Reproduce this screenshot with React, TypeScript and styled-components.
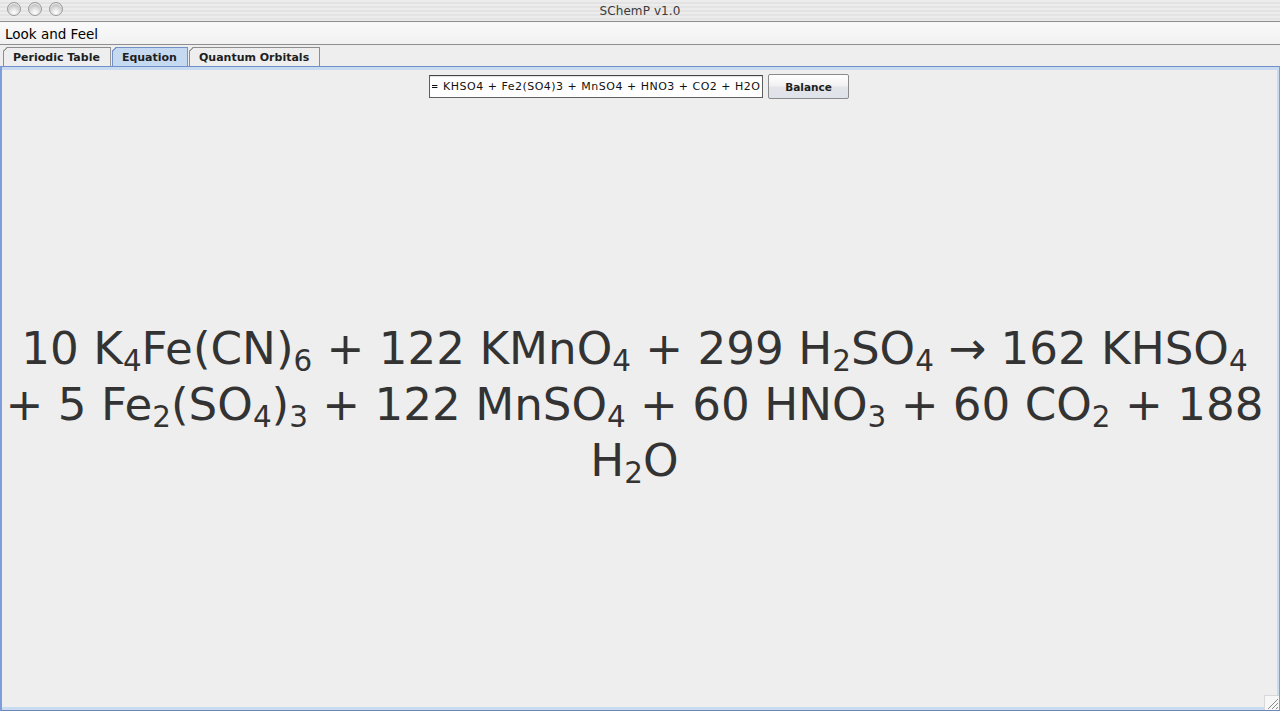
import React, { useEffect, useRef } from "react";
import styled, { createGlobalStyle } from "styled-components";

const Global = createGlobalStyle`
  html, body { margin: 0; padding: 0; background: #ececec; }
  body { width: 1280px; height: 711px; overflow: hidden; font-family: "DejaVu Sans", "Liberation Sans", sans-serif; }
`;

const Window = styled.div`
  width: 1280px;
  height: 711px;
  display: flex;
  flex-direction: column;
  background: #eeeeee;
  position: relative;
  overflow: hidden;
`;

const TitleBar = styled.div`
  height: 21px;
  flex: none;
  position: relative;
  display: flex;
  align-items: center;
  justify-content: center;
  border-bottom: 1px solid #8e8e8e;
  background: repeating-linear-gradient(
    to bottom,
    #ececec 0px,
    #ececec 2px,
    #e3e3e3 2px,
    #e3e3e3 4px
  );
`;

const Title = styled.div`
  font-family: "DejaVu Sans", sans-serif;
  font-size: 12px;
  color: #3a3a3a;
  letter-spacing: 0.1px;
`;

const Lights = styled.div`
  position: absolute;
  left: 7px;
  top: 2px;
  display: flex;
  gap: 7px;
`;

const Light = styled.div`
  width: 14px;
  height: 14px;
  border-radius: 50%;
  box-sizing: border-box;
  border: 1px solid #9a9a9a;
  background: radial-gradient(circle at 50% 80%, #ffffff 0%, #e4e4e4 35%, #bdbdbd 75%, #a9a9a9 100%);
  box-shadow: inset 0 1px 1px rgba(255, 255, 255, 0.9);
`;

const MenuBar = styled.div`
  height: 22px;
  flex: none;
  display: flex;
  align-items: center;
  padding-left: 5px;
  border-bottom: 1px solid #8e8e8e;
  background: linear-gradient(#fafafa, #f1f1f1);
`;

const MenuItem = styled.div`
  font-family: "DejaVu Sans", sans-serif;
  font-size: 13.5px;
  color: #000;
  padding-top: 1px;
`;

const TabStrip = styled.div`
  height: 20px;
  flex: none;
  display: flex;
  align-items: flex-end;
  padding-left: 3px;
  margin-top: 1px;
  gap: 1px;
`;

const Tab = styled.div<{ $active?: boolean }>`
  height: 19px;
  box-sizing: border-box;
  display: flex;
  align-items: center;
  padding: 1px 10px 0 9px;
  font-family: "DejaVu Sans", sans-serif;
  font-weight: bold;
  font-size: 11px;
  color: #1e1e1e;
  background: ${(p) => (p.$active ? "#c5d9f0" : "#eeeeee")};
  border: 1px solid ${(p) => (p.$active ? "#7390c6" : "#8d8d8d")};
  border-bottom: none;
  clip-path: polygon(4px 0, 100% 0, 100% 100%, 0 100%, 0 4px);
  position: relative;
`;

const Corner = styled.span<{ $active?: boolean }>`
  position: absolute;
  left: -1px;
  top: -1px;
  width: 6px;
  height: 6px;
  background: linear-gradient(
    135deg,
    transparent 0,
    transparent 2.4px,
    ${(p) => (p.$active ? "#7390c6" : "#8d8d8d")} 2.4px,
    ${(p) => (p.$active ? "#7390c6" : "#8d8d8d")} 3.6px,
    transparent 3.6px
  );
`;

const Panel = styled.div`
  flex: 1;
  display: flex;
  flex-direction: column;
  border-top: 1px solid #6f8fcb;
  border-left: 2px solid #7f9ddb;
  border-right: 1px solid #8d9bb3;
  border-bottom: 1px solid #6d86b5;
  box-shadow: inset 0 3px 0 #c9dbf1, inset 0 -3px 0 #c9dbf1, inset -2px 0 0 #c9dbf1;
  background: #eeeeee;
`;

const FormRow = styled.div`
  flex: none;
  display: flex;
  justify-content: center;
  align-items: center;
  gap: 5px;
  padding-top: 7px;
  padding-right: 3px;
  height: 25px;
`;

const Field = styled.input`
  width: 334px;
  height: 23px;
  box-sizing: border-box;
  border: 1px solid #5f5f5f;
  border-top-color: #444;
  box-shadow: inset 0 1px 1px rgba(0, 0, 0, 0.12);
  background: #fff;
  font-family: "DejaVu Sans", sans-serif;
  font-size: 11px;
  letter-spacing: 0.5px;
  color: #111;
  padding: 0 2px;
  outline: none;
`;

const Button = styled.button`
  width: 81px;
  height: 25px;
  box-sizing: border-box;
  border: 1px solid #8b8b8b;
  border-radius: 2px;
  background: linear-gradient(#ffffff 0%, #f2f2f2 45%, #e2e4e8 55%, #dfe3ea 100%);
  font-family: "DejaVu Sans", sans-serif;
  font-weight: bold;
  font-size: 10.5px;
  color: #1e1e1e;
  padding: 0;
`;

const Stage = styled.div`
  flex: 1;
  display: flex;
  align-items: center;
  justify-content: center;
`;

const Equation = styled.div`
  width: 100%;
  flex: none;
  margin: 0 6px 0 -6px;
  text-align: center;
  font-family: "DejaVu Sans", sans-serif;
  font-size: 45.2px;
  line-height: 56px;
  color: #333333;
`;

const Sub = styled.sub`
  font-size: 0.65em;
  vertical-align: -0.25em;
  line-height: 0;
`;

const Grip = styled.div`
  position: absolute;
  right: 1px;
  bottom: 1px;
  width: 14px;
  height: 14px;
  background: #f7f7f7;
  border-left: 1px solid #d8d8d8;
  border-top: 1px solid #d8d8d8;
`;

const GripSvg = styled.svg`
  display: block;
`;

const fullEquation =
  "K4Fe(CN)6 + KMnO4 + H2SO4 = KHSO4 + Fe2(SO4)3 + MnSO4 + HNO3 + CO2 + H2O";

const F = ({ t }: { t: string }) => {
  const parts = t.split(/(\d+)/).filter(Boolean);
  return (
    <>
      {parts.map((p, i) => (/^\d+$/.test(p) ? <Sub key={i}>{p}</Sub> : <React.Fragment key={i}>{p}</React.Fragment>))}
    </>
  );
};

export default function App() {
  const ref = useRef<HTMLInputElement>(null);
  useEffect(() => {
    if (ref.current) ref.current.scrollLeft = ref.current.scrollWidth;
  }, []);

  const terms: [string, string][] = [
    ["10", "K4Fe(CN)6"],
    ["122", "KMnO4"],
    ["299", "H2SO4"],
  ];
  const products: [string, string][] = [
    ["162", "KHSO4"],
    ["5", "Fe2(SO4)3"],
    ["122", "MnSO4"],
    ["60", "HNO3"],
    ["60", "CO2"],
    ["188", "H2O"],
  ];

  return (
    <Window>
      <Global />
      <TitleBar>
        <Lights>
          <Light />
          <Light />
          <Light />
        </Lights>
        <Title>SChemP v1.0</Title>
      </TitleBar>
      <MenuBar>
        <MenuItem>Look and Feel</MenuItem>
      </MenuBar>
      <TabStrip>
        <Tab>
          <Corner />
          Periodic Table
        </Tab>
        <Tab $active>
          <Corner $active />
          Equation
        </Tab>
        <Tab>
          <Corner />
          Quantum Orbitals
        </Tab>
      </TabStrip>
      <Panel>
        <FormRow>
          <Field ref={ref} defaultValue={fullEquation} readOnly />
          <Button>Balance</Button>
        </FormRow>
        <Stage>
          <Equation>
            {terms.map(([c, f], i) => (
              <React.Fragment key={"r" + i}>
                {i > 0 ? " +\u00a0" : ""}
                {c} <F t={f} />
              </React.Fragment>
            ))}
            {" \u2192\u00a0"}
            {products.map(([c, f], i) => (
              <React.Fragment key={"p" + i}>
                {i > 0 ? " +\u00a0" : ""}
                {c} <F t={f} />
              </React.Fragment>
            ))}
          </Equation>
        </Stage>
      </Panel>
      <Grip>
        <GripSvg width="14" height="14" viewBox="0 0 14 14">
          <path d="M3 13 L13 3 M7 13 L13 7 M11 13 L13 11" stroke="#8a8a8a" strokeWidth="1" />
        </GripSvg>
      </Grip>
    </Window>
  );
}
